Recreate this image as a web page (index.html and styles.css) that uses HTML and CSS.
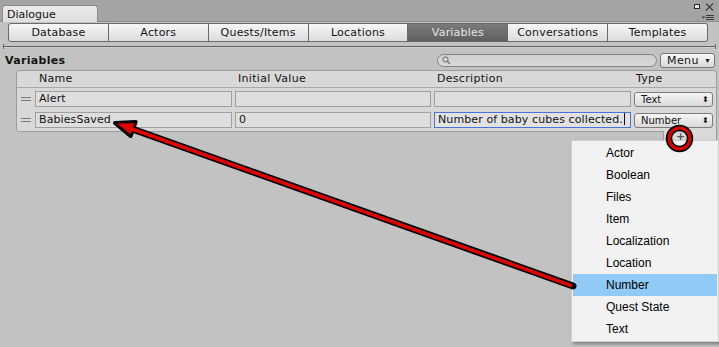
FILE: index.html
```html
<!DOCTYPE html>
<html lang="en">

<head>
    <meta charset="UTF-8">
    <title>Dialogue - Variables</title>
    <link rel="stylesheet" href="styles.css">
</head>

<body>
    <!-- window tab strip -->
    <div class="titlebar">
        <div class="win-tab">Dialogue</div>
        <svg class="win-controls" width="24" height="22" viewBox="0 0 24 22">
            <rect x="2.5" y="4.5" width="5" height="4" fill="#e8e8e8" stroke="#2a2a2a"/>
            <path d="M14 3.5 L21 10.5 M21 3.5 L14 10.5" stroke="#3a3a3a" stroke-width="1.1" fill="none"/>
            <path d="M9.5 16.5 H13.5 L11.5 18.5 Z" fill="#3a3a3a"/>
            <path d="M14 15.5 H22 M14 17.5 H22 M14 19.5 H22" stroke="#3a3a3a" stroke-width="1" fill="none"/>
        </svg>
    </div>

    <!-- editor section toolbar -->
    <div class="toolbar">
        <div class="tool-btn">Database</div>
        <div class="tool-btn">Actors</div>
        <div class="tool-btn">Quests/Items</div>
        <div class="tool-btn">Locations</div>
        <div class="tool-btn active">Variables</div>
        <div class="tool-btn">Conversations</div>
        <div class="tool-btn">Templates</div>
    </div>
    <div class="divider"></div>

    <!-- section header -->
    <div class="vars-bar">
        <div class="vars-title">Variables</div>
        <div class="search">
            <svg width="9" height="9" viewBox="0 0 9 9">
                <circle cx="3.5" cy="3.5" r="2.6" fill="none" stroke="#666" stroke-width="1"/>
                <path d="M5.4 5.4 L8 8" stroke="#666" stroke-width="1.2"/>
            </svg>
        </div>
        <div class="menu-btn"><span>Menu</span><span class="caret">▾</span></div>
    </div>

    <!-- variable list -->
    <div class="var-list">
        <div class="list-head">
            <div></div>
            <div class="col">Name</div>
            <div class="col">Initial Value</div>
            <div class="col">Description</div>
            <div class="col">Type</div>
        </div>
        <div class="list-body">
            <div class="list-row">
                <div class="handle"><span></span></div>
                <div class="field">Alert</div>
                <div class="field"></div>
                <div class="field"></div>
                <div class="popup"><span>Text</span><span class="updown">⬍</span></div>
            </div>
            <div class="list-row">
                <div class="handle"><span></span></div>
                <div class="field">BabiesSaved</div>
                <div class="field">0</div>
                <div class="field focused">Number of baby cubes collected.<span class="cursor"></span></div>
                <div class="popup"><span>Number</span><span class="updown">⬍</span></div>
            </div>
        </div>
    </div>
    <div class="list-foot"><span class="plus">+</span></div>

    <!-- type context menu -->
    <ul class="ctx-menu">
        <li>Actor</li>
        <li>Boolean</li>
        <li>Files</li>
        <li>Item</li>
        <li>Localization</li>
        <li>Location</li>
        <li class="hover">Number</li>
        <li>Quest State</li>
        <li>Text</li>
    </ul>

    <!-- annotation: arrow and ring -->
    <svg class="annotate" width="719" height="347" viewBox="0 0 719 347">
        <line x1="573" y1="286" x2="128" y2="127.5" stroke="#000" stroke-width="7" stroke-linecap="round"/>
        <polygon points="115,123 130.6,136 135.6,122" fill="#000" stroke="#000" stroke-width="4" stroke-linejoin="round"/>
        <line x1="572" y1="285.8" x2="128" y2="127.5" stroke="#e00000" stroke-width="3.5"/>
        <polygon points="117,123.5 130.6,134.5 134.6,123.2" fill="#e00000"/>
        <circle cx="679.5" cy="138.5" r="10.5" fill="none" stroke="#000" stroke-width="6.5"/>
        <circle cx="679.5" cy="138.5" r="10.5" fill="none" stroke="#e00000" stroke-width="3"/>
    </svg>
</body>

</html>
```

FILE: styles.css
```css
/* page */
body {
    margin: 0;
    width: 719px;
    height: 347px;
    overflow: hidden;
    position: relative;
    background: #c2c2c2;
    font-family: "DejaVu Sans", sans-serif;
    font-size: 11px;
    color: #141414;
}

/* window tab strip */
.titlebar {
    height: 22px;
    box-sizing: border-box;
    background: #a4a4a4;
    border-bottom: 1px solid #8e8e8e;
    display: flex;
    align-items: flex-end;
    padding-left: 2px;
}

.win-tab {
    width: 96px;
    height: 17px;
    box-sizing: border-box;
    margin-bottom: -1px;
    padding-left: 4px;
    line-height: 17px;
    background: linear-gradient(#ececec, #dedede);
    border: 1px solid #8a8a8a;
    border-bottom: none;
    border-radius: 3px 3px 0 0;
}

.win-controls {
    margin-left: auto;
    margin-right: 3px;
    align-self: flex-start;
}

/* section toolbar */
.toolbar {
    display: flex;
    margin: 1px 11px 0 8px;
    height: 19px;
}

.tool-btn {
    flex: 1;
    text-align: center;
    line-height: 17px;
    background: linear-gradient(#f7f7f7, #dcdcdc);
    border: 1px solid #6a6a6a;
    border-left: none;
    letter-spacing: 0.2px;
}

.tool-btn:first-child {
    border-left: 1px solid #6a6a6a;
    border-radius: 3px 0 0 3px;
}

.tool-btn:last-child {
    border-radius: 0 3px 3px 0;
}

.tool-btn.active {
    background: linear-gradient(#7a7a7a, #5f5f5f);
    color: #e6e6e6;
}

.divider {
    height: 5px;
    margin: 2px 3px 0;
    border-left: 1px solid #6a6a6a;
    border-right: 1px solid #6a6a6a;
    background: linear-gradient(#606060, #606060) 0 2px / 100% 1px no-repeat,
        linear-gradient(#d0d0d0, #d0d0d0) 0 3px / 100% 1px no-repeat;
}

/* section header */
.vars-bar {
    display: flex;
    align-items: center;
    height: 16px;
    margin-top: 3px;
    padding: 0 4px 0 5px;
}

.vars-title {
    flex: 1;
    font-weight: bold;
    letter-spacing: 0.3px;
}

.search {
    width: 220px;
    height: 13px;
    box-sizing: border-box;
    border: 1px solid #858585;
    border-radius: 7px;
    background: linear-gradient(#cfcfcf, #d9d9d9);
    padding: 1px 0 0 4px;
    line-height: 0;
}

.menu-btn {
    width: 55px;
    height: 15px;
    box-sizing: border-box;
    margin-left: 3px;
    border: 1px solid #777;
    border-radius: 3px;
    background: linear-gradient(#f6f6f6, #dadada);
    display: flex;
    justify-content: space-between;
    padding: 0 4px 0 6px;
    line-height: 13px;
    letter-spacing: 0.4px;
}

.caret {
    font-size: 8px;
}

/* variable list */
.var-list {
    margin: 2px 2px 0 16px;
    border: 1px solid #9c9c9c;
    border-radius: 3px 3px 0 3px;
    background: #d8d8d8;
}

.list-head,
.list-row {
    display: grid;
    grid-template-columns: 15px 197px 196px 197px 79px;
    column-gap: 3px;
    padding-right: 3px;
}

.list-head {
    height: 16px;
    line-height: 16px;
    border-bottom: 1px solid #a9a9a9;
}

.col {
    padding-left: 3px;
    letter-spacing: 0.3px;
}

.col:nth-child(2) {
    padding-left: 4px;
}

.col:last-child {
    padding-left: 2px;
}

.list-body {
    display: flex;
    flex-direction: column;
    gap: 5px;
    padding: 3px 0;
}

.list-row {
    height: 16px;
}

.handle {
    display: flex;
    align-items: center;
    justify-content: center;
    padding-left: 2px;
}

.handle span {
    width: 10px;
    height: 2px;
    border-top: 1px solid #7a7a7a;
    border-bottom: 1px solid #7a7a7a;
}

.field {
    box-sizing: border-box;
    border: 1px solid #9f9f9f;
    background: #dedede;
    padding-left: 3px;
    line-height: 14px;
    white-space: nowrap;
    overflow: hidden;
    letter-spacing: 0.1px;
}

.field.focused {
    border-color: #4a72d8;
    background: #e2e2e2;
}

.cursor {
    display: inline-block;
    width: 1px;
    height: 12px;
    background: #111;
    vertical-align: -2px;
    margin-left: 1px;
}

.popup {
    box-sizing: border-box;
    margin-top: 1px;
    height: 15px;
    border: 1px solid #7c7c7c;
    border-radius: 3px;
    background: linear-gradient(#f6f6f6, #d9d9d9);
    display: flex;
    justify-content: space-between;
    padding: 0 3px 0 6px;
    line-height: 13px;
    font-size: 10px;
}

.updown {
    font-size: 8px;
}

.list-foot {
    width: 54px;
    height: 13px;
    margin: 0 2px 0 auto;
    box-sizing: border-box;
    background: #dadada;
    border: 1px solid #9c9c9c;
    border-top: none;
    border-radius: 0 0 3px 3px;
    position: relative;
    top: -1px;
}

.plus {
    position: absolute;
    left: 12px;
    top: 0;
    font-size: 11px;
    font-weight: bold;
    color: #555;
    line-height: 12px;
}

/* type context menu */
.ctx-menu {
    position: absolute;
    left: 571px;
    top: 140px;
    width: 148px;
    height: 202px;
    box-sizing: border-box;
    margin: 0;
    padding: 1px 1px;
    list-style: none;
    background: #f2f2f2;
    border: 1px solid #cfcfcf;
    box-shadow: 2px 2px 3px rgba(0, 0, 0, 0.35);
    font-family: "Liberation Sans", Arial, sans-serif;
    font-size: 12px;
    color: #000;
}

.ctx-menu li {
    height: 22px;
    line-height: 22px;
    padding-left: 33px;
}

.ctx-menu li.hover {
    background: #91c9f7;
}

/* annotation overlay */
.annotate {
    position: absolute;
    left: 0;
    top: 0;
    pointer-events: none;
}
```
